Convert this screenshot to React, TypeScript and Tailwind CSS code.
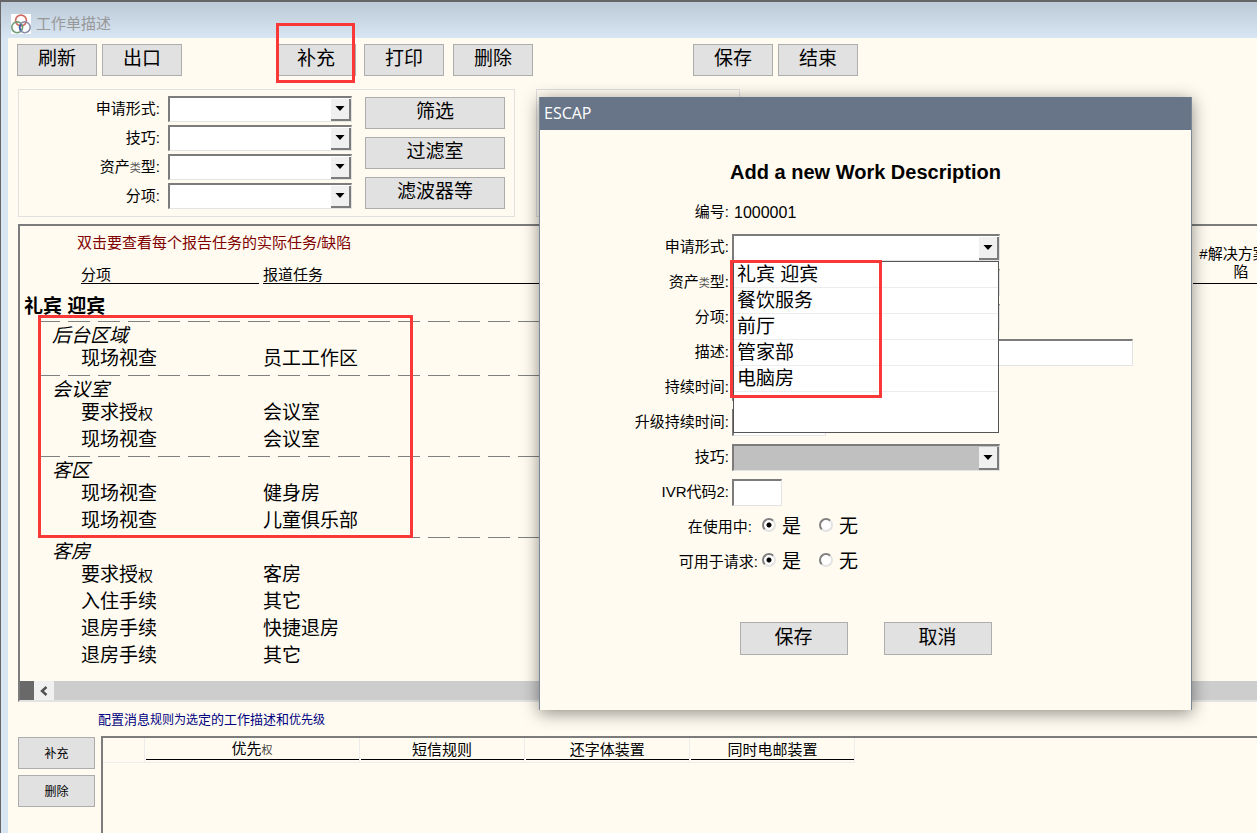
import { InputHTMLAttributes, ReactNode, SelectHTMLAttributes, useState } from "react";
import clsx from "clsx";

type Task = { item: ReactNode; task: string };
type Section = { name: string; tasks: Task[] };

const authorize = <>要求授<span className="text-[15px]">权</span></>;
const assetType = <>资产<span className="text-[11px] text-[#555]">类</span>型:</>;

const sections: Section[] = [
	{ name: "后台区域", tasks: [{ item: "现场视查", task: "员工工作区" }] },
	{
		name: "会议室",
		tasks: [
			{ item: authorize, task: "会议室" },
			{ item: "现场视查", task: "会议室" },
		],
	},
	{
		name: "客区",
		tasks: [
			{ item: "现场视查", task: "健身房" },
			{ item: "现场视查", task: "儿童俱乐部" },
		],
	},
	{
		name: "客房",
		tasks: [
			{ item: authorize, task: "客房" },
			{ item: "入住手续", task: "其它" },
			{ item: "退房手续", task: "快捷退房" },
			{ item: "退房手续", task: "其它" },
		],
	},
];

const requestForms = ["礼宾 迎宾", "餐饮服务", "前厅", "管家部", "电脑房"];

function Button({ className, children }: { className: string; children: ReactNode }) {
	return (
		<button type="button" className={clsx("shrink-0 border border-[#adadad] bg-[#e1e1e1] text-center hover:bg-[#e5f1fb]", className)}>
			{children}
		</button>
	);
}

function Select({ className, ...props }: SelectHTMLAttributes<HTMLSelectElement>) {
	return (
		<div className={clsx("relative shrink-0", className)}>
			<select
				className="block h-full w-full appearance-none border-t-2 border-r border-b border-l-2 border-t-[#7c7c7c] border-r-[#e3e3e3] border-b-[#e3e3e3] border-l-[#7c7c7c] bg-white px-1 outline-none disabled:bg-[#c0c0c0] disabled:opacity-100"
				{...props}
			/>
			<span className="pointer-events-none absolute top-[3px] right-px bottom-px flex w-5 items-center justify-center border-r-2 border-b-2 border-[#7c7c7c] bg-[#f0f0f0]">
				<svg width="10" height="6" viewBox="0 0 10 6"><path d="M0.500 0h9L5 5z" /></svg>
			</span>
		</div>
	);
}

function TextBox({ className, ...props }: InputHTMLAttributes<HTMLInputElement>) {
	return (
		<input
			type="text"
			className={clsx("h-[27px] border-t-2 border-r border-b border-l-2 border-t-[#7c7c7c] border-r-[#e3e3e3] border-b-[#e3e3e3] border-l-[#7c7c7c] bg-white px-1 outline-none", className)}
			{...props}
		/>
	);
}

function Filter({ id, label }: { id: string; label: ReactNode }) {
	return (
		<div className="flex h-[26px] items-center justify-end gap-2">
			<label htmlFor={id}>{label}</label>
			<Select id={id} className="h-[26px] w-[184px]" />
		</div>
	);
}

function Field({ id, label, children }: { id?: string; label: ReactNode; children: ReactNode }) {
	return (
		<div className="flex h-[27px] items-center gap-[3px]">
			<label htmlFor={id} className="w-[189px] shrink-0 text-right">{label}</label>
			{children}
		</div>
	);
}

function YesNo({ name, label, className }: { name: string; label: string; className?: string }) {
	const [value, setValue] = useState("是");

	return (
		<div role="radiogroup" aria-label={label} className="flex h-[27px] items-center">
			<span className={clsx("w-[218px] shrink-0 text-right", className)}>{label}</span>
			{["是", "无"].map((option) => (
				<label key={option} className="ml-1 flex w-[53px] items-center gap-[6px] text-[19px]">
					<input
						type="radio"
						name={name}
						checked={value === option}
						onChange={() => setValue(option)}
						className="mb-[5px] size-[14px] appearance-none rounded-full border-2 border-t-[#808080] border-r-[#e3e3e3] border-b-[#e3e3e3] border-l-[#808080] bg-white checked:bg-[radial-gradient(circle,#000_2px,#fff_3px)]"
					/>
					{option}
				</label>
			))}
		</div>
	);
}

function Logo() {
	return (
		<svg width="20" height="20" viewBox="0 0 20 20" fill="none" strokeWidth="1.6" className="bg-white">
			<circle cx="10" cy="6.5" r="5.4" stroke="#d0695f" />
			<circle cx="6.2" cy="13.3" r="5.4" stroke="#6f9b74" />
			<circle cx="13.8" cy="13.3" r="5.4" stroke="#8a8ea8" />
			<path d="M10 10.2c-1.600 2-1.600 4.300 0 6.400" stroke="#3f5fa8" />
		</svg>
	);
}

function TaskPanel() {
	return (
		<section className="ml-[10px] overflow-hidden border-t-2 border-b-2 border-l-2 border-t-[#7c7c7c] border-b-[#e3e3e3] border-l-[#7c7c7c]">
			<table className="w-[1269px] table-fixed border-collapse text-left">
				<colgroup>
					<col className="w-[243px]" />
					<col />
					<col className="w-24" />
				</colgroup>
				<thead className="text-[15px]">
					<tr className="h-[27px]">
						<th colSpan={2} className="p-0 pt-[7px] pl-[57px] leading-5 font-normal text-[#800000]">
							双击要查看每个报告任务的实际任务/缺陷
						</th>
						<th rowSpan={2} className="p-0 align-bottom font-normal">
							<div className="border-b border-black pb-[2px] text-center leading-[18px]">#解决方案缺陷</div>
						</th>
					</tr>
					<tr className="h-[31px] align-bottom">
						<th className="p-0 pr-1 pl-[61px] font-normal">
							<div className="border-b border-black leading-4">分项</div>
						</th>
						<th className="p-0 pr-[3px] font-normal">
							<div className="border-b border-black leading-4">报道任务</div>
						</th>
					</tr>
				</thead>
				<tbody>
					<tr className="h-[35px] align-bottom">
						<th colSpan={3} className="p-0 pl-1 text-[19px] leading-6 font-bold">礼宾 迎宾</th>
					</tr>
				</tbody>
				{sections.map((section) => (
					<tbody key={section.name} className="text-[19px]">
						<tr>
							<td colSpan={2} className="p-0 pt-[2px] pr-3 pb-1 pl-[18px]">
								<div className="h-px bg-[repeating-linear-gradient(90deg,#808080_0px_22px,transparent_22px_30px)]" />
							</td>
							<td />
						</tr>
						<tr className="h-5">
							<th colSpan={3} className="p-0 pl-8 leading-5 font-normal italic">{section.name}</th>
						</tr>
						{section.tasks.map((row, i) => (
							<tr key={i} className="h-[27px] align-top leading-[26px]">
								<td className="p-0 pl-[61px]">{row.item}</td>
								<td className="p-0">{row.task}</td>
								<td />
							</tr>
						))}
					</tbody>
				))}
			</table>
			<div className="mt-[11px] flex h-[19px] bg-[#cdcdcd]">
				<div className="w-[14px] bg-[#696969]" />
				<button type="button" aria-label="向左滚动" className="flex w-5 items-center justify-center bg-[#f0f0f0]">
					<svg width="8" height="10" viewBox="0 0 8 10" fill="none" stroke="#505050" strokeWidth="2.400"><path d="M6.500 1 2 5l4.500 4" /></svg>
				</button>
			</div>
		</section>
	);
}

function RulesPanel() {
	const cell = "border-r border-b border-[#ececec] p-0 pl-px font-normal";
	const title = "mb-[2px] border-b border-black text-center text-[15px] leading-[18px]";

	return (
		<section className="flex flex-1 flex-col">
			<h2 className="mt-2 mb-[6px] ml-[90px] text-[13px] leading-5 text-[#000080]">
				配置消息<span className="text-[12px]">规则为选</span>定的工作描述和<span className="text-[12px]">优先级</span>
			</h2>
			<div className="flex flex-1 gap-[6px] pl-[10px]">
				<div className="flex flex-col gap-[6px] pt-px">
					<Button className="h-8 w-[77px] pt-[2px] text-[12px]">补充</Button>
					<Button className="h-8 w-[77px] pt-[2px] text-[12px]">删除</Button>
				</div>
				<div className="flex-1 border-t-2 border-l-2 border-[#7c7c7c]">
					<table className="w-[752px] table-fixed border-collapse">
						<thead>
							<tr className="h-6 align-bottom">
								<td className="w-[41px] border-r border-b border-[#ececec]" />
								<th className={clsx(cell, "w-[215px]")}>
									<div className={title}>优先<span className="text-[11px] text-[#444]">权</span></div>
								</th>
								<th className={cell}><div className={title}>短信规则</div></th>
								<th className={cell}><div className={title}>还字体装置</div></th>
								<th className={cell}><div className={title}>同时电邮装置</div></th>
							</tr>
						</thead>
					</table>
				</div>
			</div>
		</section>
	);
}

function AddDialog() {
	const [open, setOpen] = useState(true);
	const [form, setForm] = useState("");

	return (
		<div role="dialog" aria-labelledby="dialog-title" className="absolute top-[95px] left-[538px] w-[653px] border-x border-[#7a8797] bg-[#fffbf0] pb-[55px] text-[15px] shadow-[0_3px_16px_rgba(0,0,0,0.45)]">
			<div className="h-[33px] bg-[#687589] pl-1 font-['Open_Sans',sans-serif] text-[16px] leading-8 text-white">ESCAP</div>
			<h1 id="dialog-title" className="mt-[30px] text-center text-[20px] leading-6 font-bold">Add a new Work Description</h1>
			<form className="mt-[15px] flex flex-col gap-2">
				<Field label="编号:">
					<output className="pl-[2px] text-[16px]">1000001</output>
				</Field>
				<Field id="form" label="申请形式:">
					<div className="relative">
						<Select id="form" className="h-[27px] w-[268px]" value={form} onMouseDown={() => setOpen(!open)} onChange={(e) => setForm(e.target.value)}>
							<option value="" />
							{requestForms.map((name) => <option key={name}>{name}</option>)}
						</Select>
						{open && (
							<ul className="absolute top-[27px] left-px z-10 h-[172px] w-[266px] border border-[#555] bg-white text-[19px]">
								{requestForms.map((name) => (
									<li key={name} className="h-[26px] border-b border-[#ececec] pl-[3px] leading-[25px]" onClick={() => { setForm(name); setOpen(false); }}>
										{name}
									</li>
								))}
							</ul>
						)}
						<div className="pointer-events-none absolute top-[26px] -left-[2px] z-20 h-[138px] w-[152px] border-3 border-[#fb3838]" />
					</div>
				</Field>
				<Field id="asset" label={assetType}><Select id="asset" className="h-[27px] w-[268px]" /></Field>
				<Field id="item" label="分项:"><Select id="item" className="h-[27px] w-[268px]" /></Field>
				<Field id="description" label="描述:"><TextBox id="description" className="w-[401px]" /></Field>
				<Field id="duration" label="持续时间:"><TextBox id="duration" className="w-[94px]" /></Field>
				<Field id="escalation" label="升级持续时间:"><TextBox id="escalation" className="w-[94px]" /></Field>
				<Field id="skill" label="技巧:"><Select id="skill" className="h-[27px] w-[268px]" disabled /></Field>
				<Field id="ivr" label="IVR代码2:"><TextBox id="ivr" className="w-[50px]" /></Field>
				<YesNo name="active" label="在使用中:" className="pr-[6px]" />
				<YesNo name="requestable" label="可用于请求:" />
				<div className="mt-[38px] flex justify-center gap-9 text-[19px]">
					<Button className="h-[33px] w-[108px]">保存</Button>
					<Button className="h-[33px] w-[108px]">取消</Button>
				</div>
			</form>
		</div>
	);
}

export default function App() {
	return (
		<main className="relative flex min-h-screen w-full flex-col overflow-hidden border-t-2 border-l border-[#666] bg-[#d8e5f2] font-['Liberation_Sans','Noto_Sans_CJK_SC',sans-serif] text-black">
			<header className="flex h-9 items-center gap-[5px] bg-linear-to-b from-[#bccad8] to-[#d8e5f2] pt-2 pl-[10px] text-[15px] text-[#989898]">
				<Logo />
				工作单描述
			</header>

			<div className="ml-[7px] flex flex-1 flex-col bg-[#fffbf0]">
				<div className="flex pt-[6px] pl-[9px] text-[19px]">
					<Button className="h-8 w-20 pb-[3px]">刷新</Button>
					<Button className="ml-[5px] h-8 w-20 pb-[3px]">出口</Button>
					<div className="relative ml-[94px] shrink-0">
						<Button className="h-8 w-20 pb-[3px]">补充</Button>
						<div className="pointer-events-none absolute -top-[21px] left-0 h-[60px] w-[79px] border-3 border-[#fb3838]" />
					</div>
					<Button className="ml-2 h-8 w-20 pb-[3px]">打印</Button>
					<Button className="ml-[9px] h-8 w-20 pb-[3px]">删除</Button>
					<Button className="ml-[160px] h-8 w-20 pb-[3px]">保存</Button>
					<Button className="ml-[5px] h-8 w-20 pb-[3px]">结束</Button>
				</div>

				<div className="mt-[13px] mb-[7px] flex gap-[21px] pl-[10px]">
					<div className="flex h-32 w-[497px] shrink-0 justify-end gap-[13px] border border-[#e0e0e0] pt-[6px] pr-[9px]">
						<div className="flex flex-col gap-[3px] text-[15px]">
							<Filter id="filter-form" label="申请形式:" />
							<Filter id="filter-skill" label="技巧:" />
							<Filter id="filter-asset" label={assetType} />
							<Filter id="filter-item" label="分项:" />
						</div>
						<div className="flex flex-col gap-2 pt-px text-[19px]">
							<Button className="h-8 w-[140px] pb-[3px]">筛选</Button>
							<Button className="h-8 w-[140px] pb-[3px]">过滤室</Button>
							<Button className="h-8 w-[140px] pb-[3px]">滤波器等</Button>
						</div>
					</div>
					<div className="h-32 w-[204px] shrink-0 border border-[#e0e0e0]" />
				</div>

				<div className="relative">
					<TaskPanel />
					<div className="pointer-events-none absolute top-[91px] left-[30px] h-[223px] w-[375px] border-3 border-[#fb3838]" />
				</div>
				<RulesPanel />
			</div>

			<AddDialog />
		</main>
	);
}
